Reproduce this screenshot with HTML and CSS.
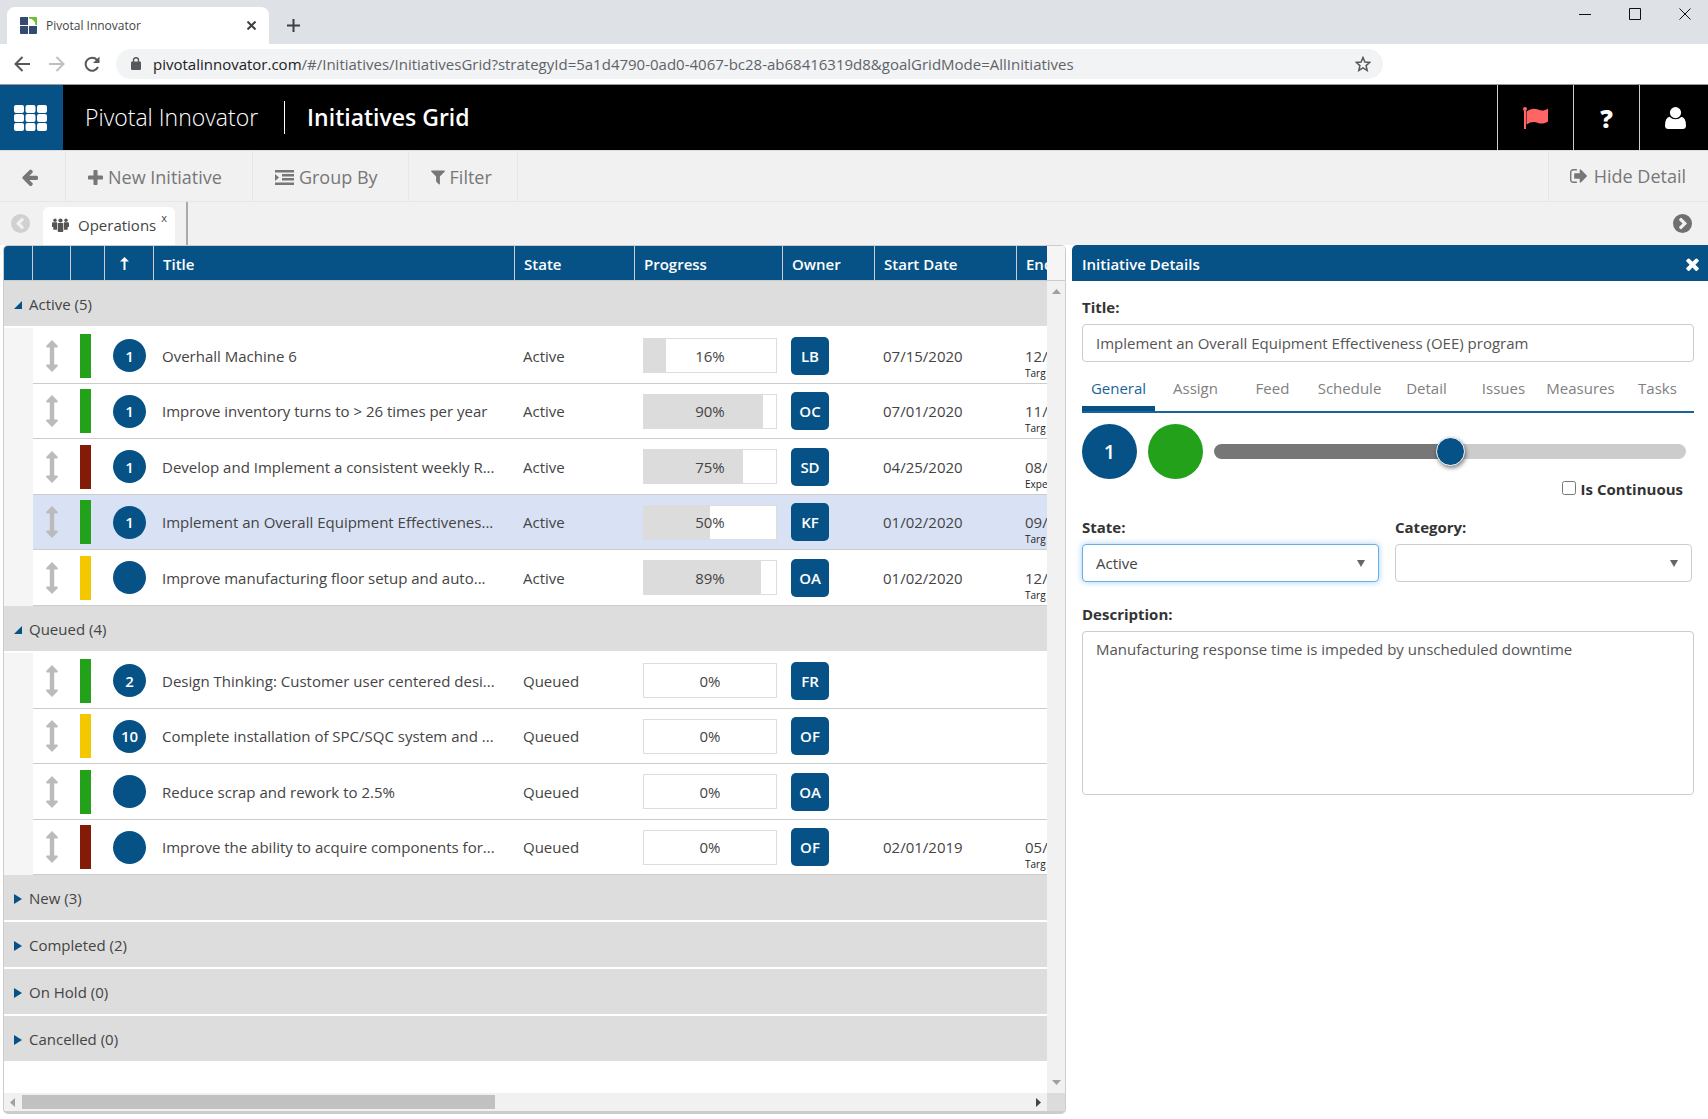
FILE: index.html
```html
<!DOCTYPE html>
<html lang="en">
<head>
<meta charset="utf-8">
<title>Pivotal Innovator</title>
<link rel="stylesheet" href="styles.css">
</head>
<body>
<svg class="sprite" aria-hidden="true">
  <symbol id="i-move" viewBox="0 0 12 32"><path d="M6 0l5.400 5.600c.8.900.3 1.900-.8 1.900H8.200v17h2.400c1.100 0 1.600 1 .8 1.900L6 32 .6 26.400c-.8-.9-.3-1.900.8-1.900h2.400v-17H1.400C.3 7.500-.2 6.500.6 5.600z"/></symbol>
  <symbol id="i-chev" viewBox="0 0 20 20"><path fill-rule="evenodd" d="M10 0a10 10 0 1 0 0 20a10 10 0 0 0 0-20zM9 4.200l5.300 5.200q.6.600 0 1.200L9 15.800q-.6.600-1.200 0L6.600 14.600q-.6-.6 0-1.200L10 10 6.600 6.600q-.6-.6 0-1.200L7.800 4.200q.6-.6 1.200 0z"/></symbol>
  <symbol id="i-times" viewBox="300 236 1192 1320"><path d="M1490 1322q0 40-28 68l-136 136q-28 28-68 28t-68-28l-294-294-294 294q-28 28-68 28t-68-28l-136-136q-28-28-28-68t28-68l294-294-294-294q-28-28-28-68t28-68l136-136q28-28 68-28t68 28l294 294 294-294q28-28 68-28t68 28l136 136q28 28 28 68t-28 68l-294 294 294 294q28 28 28 68z"/></symbol>
</svg>

<div class="browser">
  <div class="tabstrip">
    <div class="btab">
      <svg width="17" height="17" viewBox="0 0 17 17"><path fill="#344a6e" d="M1 0h7v8H0V1q0-1 1-1zM0 9h8v8H1q-1 0-1-1zM9 9h8v7q0 1-1 1H9z"/><path fill="#6cc12c" d="M9 0h7q1 0 1 1v7h-1.500Q15 2 9 1.500z"/></svg>
      <span class="btab-title">Pivotal Innovator</span>
      <button class="plain" aria-label="Close tab"><svg width="9" height="9" viewBox="0 0 9 9" stroke="#3c4043" stroke-width="2"><path d="M.5.5l8 8M8.500.5l-8 8"/></svg></button>
    </div>
    <button class="plain newtab" aria-label="New tab"><svg width="13" height="13" viewBox="0 0 13 13" stroke="#3c4043" stroke-width="2"><path d="M6.500 0v13M0 6.500h13"/></svg></button>
    <div class="winbtns">
      <button class="plain" aria-label="Minimize"><svg width="12" height="12" stroke="#111"><path d="M0 6.500h12"/></svg></button>
      <button class="plain" aria-label="Maximize"><svg width="12" height="12" fill="none" stroke="#111"><path d="M.5.5h11v11H.5z"/></svg></button>
      <button class="plain" aria-label="Close"><svg width="12" height="12" stroke="#111"><path d="M.5.5l11 11M11.500.5l-11 11"/></svg></button>
    </div>
  </div>
  <div class="addressbar">
    <button class="plain" aria-label="Back"><svg width="16" height="16" fill="none" stroke="#55585c" stroke-width="2"><path d="M16 8H1.500M8.500 1L1.500 8l7 7"/></svg></button>
    <button class="plain" aria-label="Forward"><svg width="16" height="16" fill="none" stroke="#bdbfc2" stroke-width="2"><path d="M0 8h14.500M7.500 1l7 7-7 7"/></svg></button>
    <button class="plain" aria-label="Reload"><svg width="16" height="16" fill="none" stroke="#55585c" stroke-width="2"><path d="M14 11A6.500 6.500 0 1 1 13 3.800"/><path fill="#55585c" stroke="none" d="M15.500.5v6.500H9z"/></svg></button>
    <div class="omnibox">
      <svg width="10" height="13" viewBox="0 0 10 13"><path fill="#55585c" d="M1 4.500h8q1 0 1 1V12q0 1-1 1H1q-1 0-1-1V5.500q0-1 1-1z"/><path fill="none" stroke="#55585c" stroke-width="1.400" d="M2.500 5V3a2.500 2.300 0 0 1 5 0v2"/></svg>
      <span class="url"><b>pivotalinnovator.com</b>/#/Initiatives/InitiativesGrid?strategyId=5a1d4790-0ad0-4067-bc28-ab68416319d8&amp;goalGridMode=AllInitiatives</span>
      <svg width="16" height="16" viewBox="0 0 16 16" fill="none" stroke="#55585c" stroke-width="1.500"><path d="M8 1.500l1.900 4.500 4.900.4-3.700 3.200 1.100 4.800L8 11.900l-4.200 2.500 1.100-4.800L1.200 6.400l4.900-.4z"/></svg>
    </div>
  </div>
</div>

<header class="appbar">
  <button class="plain launcher" aria-label="Apps"><svg width="33" height="26" viewBox="0 0 33 26" fill="#fff"><rect width="10" height="8" rx="2"/><rect x="11.500" width="10" height="8" rx="2"/><rect x="23" width="10" height="8" rx="2"/><rect y="9" width="10" height="8" rx="2"/><rect x="11.500" y="9" width="10" height="8" rx="2"/><rect x="23" y="9" width="10" height="8" rx="2"/><rect y="18" width="10" height="8" rx="2"/><rect x="11.500" y="18" width="10" height="8" rx="2"/><rect x="23" y="18" width="10" height="8" rx="2"/></svg></button>
  <span class="product">Pivotal Innovator</span>
  <h1 class="pagetitle">Initiatives Grid</h1>
  <div class="appbtns">
    <button class="plain flag" aria-label="Flags"><svg width="25" height="22" viewBox="0 0 25 22" fill="#ff6565"><path d="M1 3.500h2V22H1z"/><circle cx="2" cy="2" r="2"/><path d="M3.500 4.500C8 1.500 11 1 15 2.500S21 4 25 1.500v13c-4 2.500-7 2.500-10.500 1.200S7.500 15 3.500 17.500z"/></svg></button>
    <button class="plain help">?</button>
    <button class="plain user" aria-label="Account"><svg width="21" height="22" viewBox="0 0 21 22" fill="#fff"><path d="M4.500 9.800Q7 12.300 10.500 12.300T16.500 9.800Q21 11 21 18.500 21 22 17.500 22h-14Q0 22 0 18.500 0 11 4.500 9.800z"/><circle cx="10.500" cy="5.600" r="5.600"/></svg></button>
  </div>
</header>

<nav class="toolbar">
  <button class="tool back" aria-label="Back"><svg width="17" height="17" viewBox="64 128 1600 1600"><path d="M1664 896v128q0 53-32.500 90.500t-84.500 37.500h-704l293 294q38 36 38 90t-38 90l-75 76q-37 37-90 37-52 0-91-37l-651-652q-37-37-37-90 0-52 37-91l651-650q38-38 91-38 52 0 90 38l75 74q38 38 38 91t-38 91l-293 293h704q52 0 84.500 37.500t32.500 90.500z"/></svg></button>
  <button class="tool"><svg width="15" height="15" viewBox="192 128 1408 1408"><path d="M1600 736v192q0 40-28 68t-68 28h-416v416q0 40-28 68t-68 28h-192q-40 0-68-28t-28-68v-416h-416q-40 0-68-28t-28-68v-192q0-40 28-68t68-28h416v-416q0-40 28-68t68-28h192q40 0 68 28t28 68v416h416q40 0 68 28t28 68z"/></svg>New Initiative</button>
  <button class="tool"><svg width="19" height="15" viewBox="0 0 19 15"><path d="M0 0h19v2.500H0zM7 4h12v2.500H7zM7 8h12v2.500H7zM0 12.500h19V15H0zM0 4l4 3.500L0 11z"/></svg>Group By</button>
  <button class="tool filter"><svg width="14" height="15" viewBox="190 256 1412 1410"><path d="M1595 295q17 41-14 70l-493 493v742q0 42-39 59-13 5-25 5-27 0-45-19l-256-256q-19-19-19-45v-486l-493-493q-31-29-14-70 17-39 59-39h1280q42 0 59 39z"/></svg>Filter</button>
  <button class="tool hide"><svg width="17" height="14" viewBox="64 256 1568 1280"><path d="M704 1440q0 4 1 20t.5 26.500-3 23.500-10 19.500-20.500 6.500h-320q-119 0-203.500-84.500t-84.500-203.500v-704q0-119 84.500-203.500t203.500-84.500h320q13 0 22.500 9.500t9.500 22.500q0 4 1 20t.5 26.500-3 23.500-10 19.500-20.500 6.500h-320q-66 0-113 47t-47 113v704q0 66 47 113t113 47h312l11.500 1 11.500 3 8 5.500 7 9 2 13.500zm928-544q0 26-19 45l-544 544q-19 19-45 19t-45-19-19-45v-288h-448q-26 0-45-19t-19-45v-384q0-26 19-45t45-19h448v-288q0-26 19-45t45-19 45 19l544 544q19 19 19 45z"/></svg>Hide Detail</button>
</nav>

<div class="viewtabs">
  <button class="plain prev" aria-label="Previous"><svg width="19" height="19"><use href="#i-chev"/></svg></button>
  <div class="viewtab">
    <svg width="17" height="14" viewBox="0 0 17 14"><circle cx="3" cy="2.200" r="1.700"/><circle cx="14" cy="2.200" r="1.700"/><circle cx="8.500" cy="2.500" r="2.100"/><path d="M1.200 4.300H5v7.500H1.300V9H0V5.500q0-1.200 1.200-1.200zM15.800 4.300H12v7.500h3.700V9H17V5.500q0-1.200-1.200-1.200zM5.700 5h5.600v8q0 1-1 1H6.700q-1 0-1-1z"/></svg>
    <span>Operations</span><button class="plain closetab" aria-label="Close Operations">x</button>
  </div>
  <span class="divider"></span>
  <button class="plain next" aria-label="Next"><svg width="19" height="19"><use href="#i-chev"/></svg></button>
</div>

<main class="workspace">
  <section class="grid">
    <div class="viewport">
      <table>
        <colgroup><col class="c-exp"><col class="c-move"><col class="c-color"><col class="c-rank"><col class="c-title"><col class="c-state"><col class="c-prog"><col class="c-owner"><col class="c-date"><col class="c-end"></colgroup>
        <thead><tr><th></th><th></th><th></th><th class="sort"><svg width="9" height="13" viewBox="0 0 9 13"><path fill="#fff" d="M4.500 0L9 4.500H5.500V13h-2V4.500H0z"/></svg></th><th>Title</th><th>State</th><th>Progress</th><th>Owner</th><th>Start Date</th><th>End</th></tr></thead>
        <tbody><tr class="group open"><td colspan="10"><button class="plain">Active (5)</button></td></tr></tbody>
        <tbody class="rows">
          <tr><td></td><td><svg class="move"><use href="#i-move"/></svg></td><td><i class="bar green"></i></td><td><span class="rank">1</span></td><td>Overhall Machine 6</td><td>Active</td><td><div class="progress"><i style="width:17%"></i><span>16%</span></div></td><td><span class="owner">LB</span></td><td>07/15/2020</td><td class="end"><span>12/</span><small>Targ</small></td></tr>
          <tr><td></td><td><svg class="move"><use href="#i-move"/></svg></td><td><i class="bar green"></i></td><td><span class="rank">1</span></td><td>Improve inventory turns to &gt; 26 times per year</td><td>Active</td><td><div class="progress"><i style="width:90%"></i><span>90%</span></div></td><td><span class="owner">OC</span></td><td>07/01/2020</td><td class="end"><span>11/</span><small>Targ</small></td></tr>
          <tr><td></td><td><svg class="move"><use href="#i-move"/></svg></td><td><i class="bar red"></i></td><td><span class="rank">1</span></td><td>Develop and Implement a consistent weekly R...</td><td>Active</td><td><div class="progress"><i style="width:75%"></i><span>75%</span></div></td><td><span class="owner">SD</span></td><td>04/25/2020</td><td class="end"><span>08/</span><small>Expe</small></td></tr>
          <tr class="selected"><td></td><td><svg class="move"><use href="#i-move"/></svg></td><td><i class="bar green"></i></td><td><span class="rank">1</span></td><td>Implement an Overall Equipment Effectivenes...</td><td>Active</td><td><div class="progress"><i style="width:50%"></i><span>50%</span></div></td><td><span class="owner">KF</span></td><td>01/02/2020</td><td class="end"><span>09/</span><small>Targ</small></td></tr>
          <tr><td></td><td><svg class="move"><use href="#i-move"/></svg></td><td><i class="bar yellow"></i></td><td><span class="rank"></span></td><td>Improve manufacturing floor setup and auto...</td><td>Active</td><td><div class="progress"><i style="width:89%"></i><span>89%</span></div></td><td><span class="owner">OA</span></td><td>01/02/2020</td><td class="end"><span>12/</span><small>Targ</small></td></tr>
        </tbody>
        <tbody><tr class="group open"><td colspan="10"><button class="plain">Queued (4)</button></td></tr></tbody>
        <tbody class="rows">
          <tr><td></td><td><svg class="move"><use href="#i-move"/></svg></td><td><i class="bar green"></i></td><td><span class="rank">2</span></td><td>Design Thinking: Customer user centered desi...</td><td>Queued</td><td><div class="progress"><span>0%</span></div></td><td><span class="owner">FR</span></td><td></td><td></td></tr>
          <tr><td></td><td><svg class="move"><use href="#i-move"/></svg></td><td><i class="bar yellow"></i></td><td><span class="rank">10</span></td><td>Complete installation of SPC/SQC system and ...</td><td>Queued</td><td><div class="progress"><span>0%</span></div></td><td><span class="owner">OF</span></td><td></td><td></td></tr>
          <tr><td></td><td><svg class="move"><use href="#i-move"/></svg></td><td><i class="bar green"></i></td><td><span class="rank"></span></td><td>Reduce scrap and rework to 2.5%</td><td>Queued</td><td><div class="progress"><span>0%</span></div></td><td><span class="owner">OA</span></td><td></td><td></td></tr>
          <tr><td></td><td><svg class="move"><use href="#i-move"/></svg></td><td><i class="bar red"></i></td><td><span class="rank"></span></td><td>Improve the ability to acquire components for...</td><td>Queued</td><td><div class="progress"><span>0%</span></div></td><td><span class="owner">OF</span></td><td>02/01/2019</td><td class="end"><span>05/</span><small>Targ</small></td></tr>
        </tbody>
        <tbody>
          <tr class="group"><td colspan="10"><button class="plain">New (3)</button></td></tr>
          <tr class="group"><td colspan="10"><button class="plain">Completed (2)</button></td></tr>
          <tr class="group"><td colspan="10"><button class="plain">On Hold (0)</button></td></tr>
          <tr class="group"><td colspan="10"><button class="plain">Cancelled (0)</button></td></tr>
        </tbody>
      </table>
    </div>
    <div class="vscroll">
      <div class="vscroll-head"></div>
      <svg width="9" height="5"><path fill="#a0a0a0" d="M4.500 0L9 5H0z"/></svg>
      <svg width="9" height="5"><path fill="#a0a0a0" d="M4.500 5L9 0H0z"/></svg>
    </div>
    <div class="hscroll">
      <svg width="5" height="9"><path fill="#a0a0a0" d="M0 4.500L5 0v9z"/></svg>
      <div class="htrack"><div class="hthumb"></div></div>
      <svg width="5" height="9"><path fill="#444" d="M5 4.500L0 0v9z"/></svg>
    </div>
    <div class="corner"></div>
  </section>

  <aside class="detail">
    <div class="detail-head"><h2>Initiative Details</h2><button class="plain" aria-label="Close details"><svg width="13" height="14" fill="#fff"><use href="#i-times"/></svg></button></div>
    <form class="form">
      <label for="title">Title:</label>
      <input id="title" class="field" type="text" value="Implement an Overall Equipment Effectiveness (OEE) program">
      <div class="tabs">
        <a class="on" href="#general">General</a><a href="#assign">Assign</a><a href="#feed">Feed</a><a href="#schedule">Schedule</a><a href="#detail">Detail</a><a href="#issues">Issues</a><a href="#measures">Measures</a><a href="#tasks">Tasks</a>
      </div>
      <div class="status">
        <span class="dot">1</span><span class="dot dot-green"></span>
        <input type="range" min="0" max="100" value="50" aria-label="Progress">
      </div>
      <div class="continuous"><input type="checkbox" id="cont"><label for="cont">Is Continuous</label></div>
      <div class="pair">
        <div><label for="state">State:</label><div class="select focus"><select id="state"><option>Active</option><option>Queued</option></select></div></div>
        <div><label for="cat">Category:</label><div class="select"><select id="cat"><option></option></select></div></div>
      </div>
      <label for="desc">Description:</label>
      <textarea id="desc" class="field">Manufacturing response time is impeded by unscheduled downtime</textarea>
    </form>
  </aside>
</main>
</body>
</html>
```
FILE: styles.css
```css
* { box-sizing: border-box; }
body {
  margin: 0;
  min-height: 100vh;
  display: flex;
  flex-direction: column;
  font: 15px/20px "Open Sans", "Noto Sans", sans-serif;
  color: #444;
  background: #fff;
}
svg { display: block; flex: none; }
.sprite { position: absolute; width: 0; height: 0; }
.plain { border: 0; padding: 0; margin: 0; background: none; color: inherit; font: inherit; display: flex; align-items: center; justify-content: center; }

/* browser chrome */
.tabstrip { height: 44px; padding: 7px 0 0 7px; background: #dee1e6; display: flex; }
.btab { width: 262px; padding: 0 13px; border-radius: 8px 8px 0 0; background: #fff; display: flex; align-items: center; gap: 9px; font-size: 12px; }
.btab-title { flex: 1; }
.newtab { width: 48px; }
.winbtns { margin-left: auto; height: 14px; display: flex; gap: 38px; padding-right: 17px; }
.addressbar { height: 41px; padding: 0 0 1px 14px; border-bottom: 1px solid #999; display: flex; align-items: center; gap: 19px; }
.omnibox { flex: 0 1 1267px; height: 30px; margin-left: -3px; border-radius: 15px; background: #f1f3f4; display: flex; align-items: center; gap: 12px; padding: 0 12px 0 15px; }
.url { flex: 1; font-size: 15px; color: #5f6368; white-space: nowrap; overflow: hidden; }
.url b { font-weight: 400; color: #202124; }

/* application bar */
.appbar { height: 65px; background: #000; color: #fff; display: flex; align-items: center; }
.launcher { width: 63px; height: 65px; padding-right: 2px; background: #065286; }
.product { padding: 0 26px 0 22px; font-size: 23px; line-height: 33px; font-weight: 300; border-right: 1px solid #fff; }
.pagetitle { margin: 0 0 0 22px; font-size: 23px; line-height: 33px; font-weight: 600; }
.appbtns { margin-left: auto; display: flex; }
.appbtns button { height: 65px; border-left: 1px solid #ccc; }
.appbtns .flag { width: 76px; }
.appbtns .help { width: 66px; font-size: 25px; font-weight: 800; }
.appbtns .user { width: 69px; padding-left: 2px; }

/* toolbar */
.toolbar { height: 52px; background: #f1f1f1; border-top: 1px solid #ddd; border-bottom: 1px solid #e6e6e6; display: flex; }
.tool { border: 0; border-right: 1px solid #e6e6e6; background: none; padding: 2px 30px 0 22px; color: #777; fill: #777; font: 18px/24px "Open Sans", sans-serif; display: flex; align-items: center; gap: 5px; }
.tool.back { padding: 2px 27px 0 21px; }
.tool.filter { padding-right: 25px; }
.tool.hide { margin-left: auto; padding: 0 22px 0 21px; gap: 7px; border-right: 0; border-left: 1px solid #e6e6e6; }

.viewtabs { height: 43px; background: #f1f1f1; display: flex; align-items: center; }
.prev { width: 43px; fill: #d0d0d0; padding-right: 2px; }
.prev svg { transform: rotate(180deg); }
.next { margin-left: auto; width: 52px; fill: #707070; }
.viewtab { align-self: flex-end; height: 38px; padding: 0 8px 3px 9px; border-radius: 6px 6px 0 0; background: #fff; fill: #555; display: flex; align-items: center; gap: 9px; }
.closetab { align-self: flex-start; margin-left: -4px; padding-top: 3px; font-size: 11px; line-height: 16px; }
.divider { align-self: stretch; width: 2px; margin-left: 11px; background: #aaa; }

/* workspace */
.workspace { flex: 1; display: flex; gap: 6px; padding: 0 0 5px 3px; }
.grid { flex: 1; min-width: 0; display: grid; grid-template: 1fr 18px / minmax(0, 1fr) 18px; border: 1px solid #ccc; border-bottom: 3px solid #ccc; border-radius: 5px; overflow: hidden; }
.viewport { overflow: hidden; }
table { table-layout: fixed; border-collapse: separate; border-spacing: 0; width: 1154px; }
.c-exp { width: 29px; } .c-move { width: 38px; } .c-color { width: 34px; } .c-rank { width: 49px; }
.c-title { width: 361px; } .c-state { width: 120px; } .c-prog { width: 148px; } .c-owner { width: 92px; }
.c-date { width: 142px; } .c-end { width: 141px; }
th { height: 35px; padding: 1px 8px 0 9px; background: #065286; color: #fff; font-weight: 600; text-align: left; border-right: 1px solid #ccc; border-bottom: 1px solid #ccc; }
.sort { padding: 0 15px; }
td { padding: 0 8px; white-space: nowrap; border-bottom: 1px solid #ccc; overflow: hidden; }
.rows tr { height: 56px; }
.rows tr:nth-child(even) { height: 55px; }
.rows td:first-child { background: #f5f5f5; border-bottom: 0; }
.rows td:nth-child(2), .rows td:nth-child(3), .rows td:nth-child(4) { padding: 0; }
.selected td { background: #d9e2f4; }
.group td { height: 47px; padding: 0 8px; background: #ddd; border-bottom: 2px solid #fff; }
.group button { gap: 7px; }
.group button::before { content: ""; border: 5px solid transparent; border-left: 8px solid #065286; border-right: 0; margin: 2px 0 0 2px; }
.group.open button::before { border: 0; border-left: 8px solid transparent; border-bottom: 8px solid #065286; }
.move { width: 12px; height: 32px; margin: 0 auto; fill: #bbb; }
.bar { display: block; width: 11px; height: 44px; margin: 0 0 0 9px; }
.green { background: #24a11b; } .red { background: #821b08; } .yellow { background: #f3c800; }
.rank { width: 33px; height: 33px; margin: 0 auto; border-radius: 50%; background: #065286; color: #fff; font-weight: 600; display: flex; align-items: center; justify-content: center; }
.progress { position: relative; height: 35px; width: 134px; border: 1px solid #ddd; background: #fff; display: flex; align-items: center; justify-content: center; }
.progress i { position: absolute; left: 0; top: 0; bottom: 0; background: #dcdcdc; }
.progress span { position: relative; }
.owner { width: 38px; height: 38px; border-radius: 5px; background: #065286; color: #fff; font-weight: 600; display: flex; align-items: center; justify-content: center; }
.end small { display: block; font-size: 10px; line-height: 14px; margin-bottom: -14px; color: #222; }

.vscroll { background: #f1f1f1; display: flex; flex-direction: column; align-items: center; padding-bottom: 8px; }
.vscroll-head { align-self: stretch; height: 35px; margin-bottom: 8px; border-bottom: 1px solid #ccc; background: #f5f5f5; }
.vscroll svg:last-child { margin-top: auto; }
.hscroll { background: #f1f1f1; display: flex; align-items: center; gap: 7px; padding: 0 6px; }
.htrack { flex: 1; }
.hthumb { width: 47%; height: 14px; background: #c1c1c1; }
.corner { background: #dcdcdc; }

/* detail panel */
.detail { width: 636px; }
.detail-head { height: 36px; padding: 1px 9px 0 10px; border-radius: 5px 0 0 0; background: #065286; color: #fff; display: flex; align-items: center; justify-content: space-between; }
.detail-head h2 { margin: 0; font-size: 15px; line-height: 20px; font-weight: 600; }
.form { padding: 16px 14px 0 10px; }
.form label { display: block; font-weight: 700; color: #333; line-height: 20px; }
.field { display: block; width: 100%; border: 1px solid #ccc; border-radius: 4px; padding: 0 13px; font: 15px/20px "Open Sans", sans-serif; color: #555; background: #fff; outline: 0; resize: none; }
input.field { height: 38px; margin-top: 7px; }
.tabs { margin-top: 16px; display: grid; grid-template-columns: repeat(8, 1fr); column-gap: 4px; border-bottom: 2px solid #1b6499; }
.tabs a { height: 33px; color: #808080; text-decoration: none; text-align: center; white-space: nowrap; }
.tabs a.on { color: #1b6499; border-bottom: 5px solid #065286; }
.status { margin-top: 11px; display: flex; align-items: center; gap: 11px; }
.dot { width: 55px; height: 55px; border-radius: 50%; background: #065286; color: #fff; font-size: 20px; font-weight: 600; display: flex; align-items: center; justify-content: center; }
.dot-green { background: #24a11b; }
input[type=range] { appearance: none; flex: 1; min-width: 0; margin: 0 8px 0 0; height: 15px; border-radius: 8px; background: linear-gradient(90deg, #777 50%, #ccc 50%); }
input[type=range]::-webkit-slider-thumb { appearance: none; width: 29px; height: 29px; border-radius: 50%; border: 1px solid #fff; background: #065286; box-shadow: 1px 2px 4px rgba(0,0,0,.5); }
.continuous { display: flex; align-items: center; justify-content: flex-end; gap: 5px; padding-right: 11px; }
.continuous input { width: 14px; height: 14px; margin: 0 0 2px; }
.pair { display: grid; grid-template-columns: 1fr 1fr; gap: 16px; padding: 18px 2px 22px 0; }
.select { position: relative; margin-top: 7px; }
.select::after { content: ""; position: absolute; right: 14px; top: 16px; border: 4px solid transparent; border-top: 7px solid #666; border-bottom: 0; }
select { appearance: none; display: block; width: 100%; height: 38px; padding: 0 13px; border: 1px solid #ccc; border-radius: 4px; background: #fff; color: #444; font: 15px/20px "Open Sans", sans-serif; }
.focus select { border-color: #66afe9; box-shadow: 0 0 6px rgba(102,175,233,.6); }
textarea.field { height: 164px; margin-top: 7px; padding-top: 7px; }
```
